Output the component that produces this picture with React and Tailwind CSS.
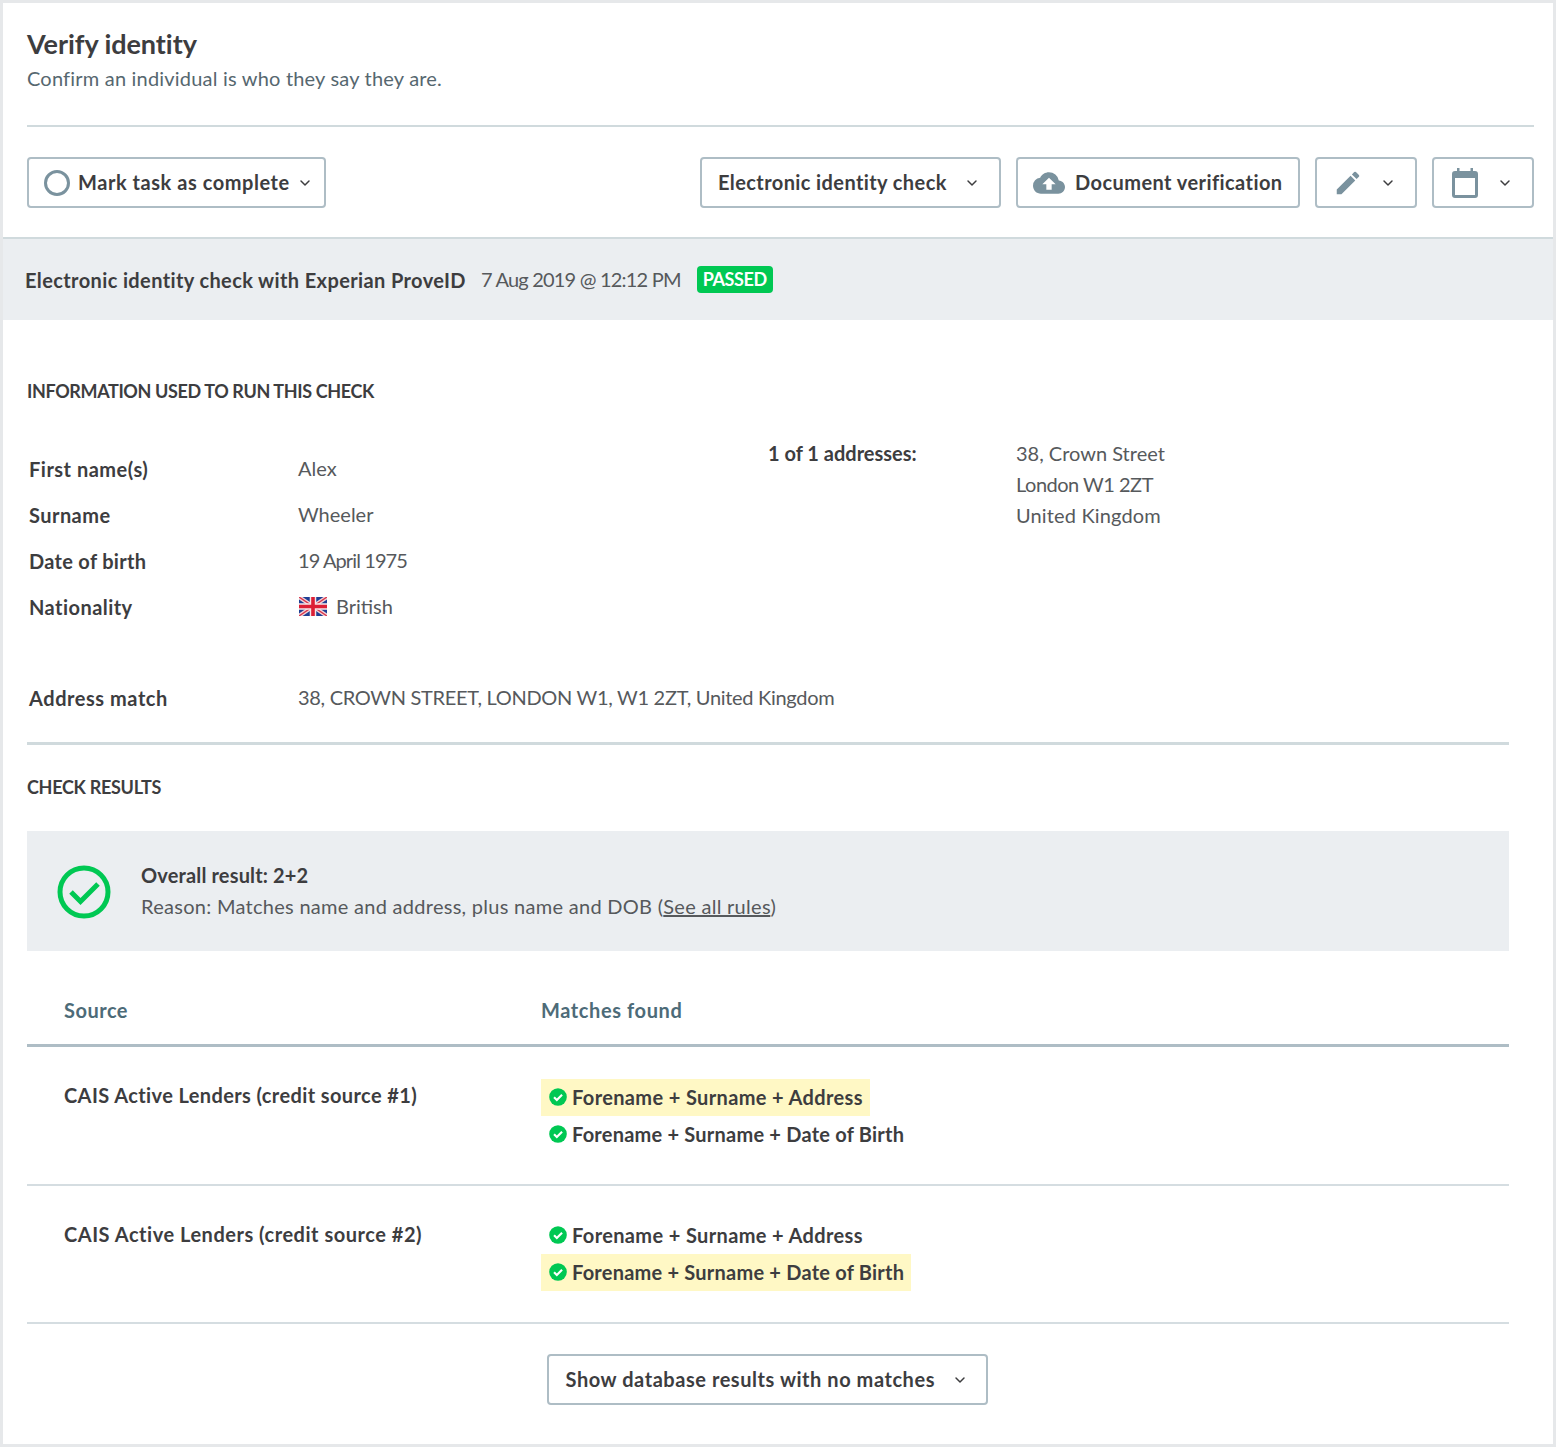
import React from 'react';
import { ChevronDown } from 'lucide-react';

const CheckBadge = ({ className }) => (
  <svg viewBox="0 0 20 20" className={className}>
    <circle cx="10" cy="10" r="9.8" fill="#00c853" />
    <path d="M5.6 10.3l3.1 3 5.8-5.8" fill="none" stroke="#fff" strokeWidth="2.4" />
  </svg>
);

const Flag = () => (
  <svg viewBox="0 0 28 19" className="w-[28px] h-[19px] shrink-0 ml-[1px]">
    <rect width="28" height="19" fill="#1f3f94" />
    <path d="M0 0L28 19M28 0L0 19" stroke="#f3d3d6" strokeWidth="4" />
    <path d="M0 0L28 19M28 0L0 19" stroke="#d8344a" strokeWidth="1.4" />
    <path d="M14 0V19M0 9.5H28" stroke="#f7e6e8" strokeWidth="6.5" />
    <path d="M14 0V19M0 9.5H28" stroke="#dc1f35" strokeWidth="3.6" />
  </svg>
);

const Btn = ({ className = '', children }) => (
  <div className={`h-[51px] flex items-center bg-white border-2 border-[#aebdc5] rounded-[4px] font-bold text-[20px] text-[#3d3d3f] ${className}`}>
    {children}
  </div>
);

const Chevron = ({ className = '' }) => (
  <ChevronDown size={16} strokeWidth={2.2} className={`text-[#3d3d3f] shrink-0 ${className}`} />
);

const Row = ({ label, labelClass = 'tracking-[0.45px]', children }) => (
  <div className="h-[46px] flex items-center">
    <div className={`w-[269px] font-bold text-[#3d3d3f] ${labelClass}`}>{label}</div>
    <div className="flex items-center pb-[2px] text-[#56595c]">{children}</div>
  </div>
);

const Match = ({ text, hl, track }) => (
  <div className={`h-[37px] pl-[8px] pr-[7px] flex items-center gap-[5px] w-fit font-bold text-[#3d3d3f] ${hl ? 'bg-[#fff8c5]' : ''}`}>
    <CheckBadge className="w-[18px] h-[18px] -mt-[2px]" />
    <span className={`pb-[2px] ${track}`}>{text}</span>
  </div>
);

const Source = ({ name, top, hlFirst, height, pad }) => (
  <div className={`border-b-2 border-[#d5dde1] flex ${height}`}>
    <div className={`w-[514px] pl-[37px] font-bold text-[#3d3d3f] ${top}`}>{name}</div>
    <div className={pad}>
      <Match text="Forename + Surname + Address" hl={hlFirst} track="tracking-[0.36px]" />
      <Match text="Forename + Surname + Date of Birth" hl={!hlFirst} track="tracking-[0.22px]" />
    </div>
  </div>
);

export default function App() {
  return (
    <div className="w-[1556px] h-[1447px] border-[3px] border-[#e6e8ea] bg-white text-[20px] font-['Lato','Open_Sans',sans-serif] text-[#3d3d3f]">
      <div className="px-[24px] pt-[23px]">
        <h1 className="text-[27px] leading-[36px] font-bold text-[#3d3d3f] tracking-[-0.05px]">Verify identity</h1>
        <p className="leading-[32px] text-[#56676f] tracking-[0.2px]">Confirm an individual is who they say they are.</p>
        <div className="mt-[31px] h-[2px] w-[1507px] bg-[#d0dadd]" />
        <div className="mt-[30px] flex w-[1507px]">
          <Btn className="w-[299px] pl-[15px]">
            <span className="w-[26px] h-[26px] rounded-full border-[3px] border-[#7a929e] mr-[8px]" />
            <span className="pb-[1px] tracking-[0.55px]">Mark task as complete</span>
            <Chevron className="ml-[7px]" />
          </Btn>
          <Btn className="ml-auto w-[301px] pl-[16px]">
            <span className="pb-[1px] tracking-[0.4px]">Electronic identity check</span>
            <Chevron className="ml-[17px]" />
          </Btn>
          <Btn className="ml-[15px] w-[284px] pl-[15px]">
            <svg viewBox="0 0 24 24" className="w-[32px] h-[32px] mr-[10px] fill-[#7a929e]">
              <path d="M19.35 10.04A7.49 7.49 0 0 0 12 4C9.11 4 6.6 5.64 5.35 8.04A5.99 5.99 0 0 0 0 14c0 3.31 2.69 6 6 6h13c2.76 0 5-2.24 5-5 0-2.64-2.05-4.78-4.65-4.96zM14 13v4h-4v-4H7l5-5 5 5h-3z" />
            </svg>
            <span className="pb-[1px] tracking-[0.43px]">Document verification</span>
          </Btn>
          <Btn className="ml-[15px] w-[102px] pl-[16px]">
            <svg viewBox="0 0 24 24" className="w-[30px] h-[30px] fill-[#7a929e]">
              <path d="M3 17.25V21h3.75L17.81 9.94l-3.75-3.75L3 17.25zM20.71 7.04a1 1 0 0 0 0-1.41l-2.34-2.34a1 1 0 0 0-1.41 0l-1.83 1.83 3.75 3.75 1.83-1.83z" />
            </svg>
            <Chevron className="ml-[17px]" />
          </Btn>
          <Btn className="ml-[15px] w-[102px] pl-[18px]">
            <svg viewBox="0 0 26 30" className="w-[26px] h-[30px] fill-[#7a929e]">
              <path d="M5 0h2.5v3h11V0H21v3h2a3 3 0 0 1 3 3v21a3 3 0 0 1-3 3H3a3 3 0 0 1-3-3V6a3 3 0 0 1 3-3h2V0zM3 10v17h20V10H3z" />
            </svg>
            <Chevron className="ml-[19px]" />
          </Btn>
        </div>
      </div>

      <div className="mt-[29px] h-[83px] bg-[#ebeef1] border-t-2 border-[#d0dadd] pl-[22px] flex items-center">
        <span className="pt-[1px] font-bold text-[#3d3d3f] tracking-[0.38px]">Electronic identity check with Experian ProveID</span>
        <span className="ml-[15px] pb-[1px] text-[#56595c] tracking-[-0.8px]">7 Aug 2019 @ 12:12 PM</span>
        <span className="ml-[16px] h-[27px] px-[6px] flex items-center bg-[#00c853] rounded-[4px] text-white font-bold text-[18px] tracking-[-0.4px]">PASSED</span>
      </div>

      <div className="pl-[24px] w-[1506px]">
        <h2 className="mt-[58px] leading-[26px] text-[18px] font-bold text-[#3d3d3f] tracking-[-0.38px]">INFORMATION USED TO RUN THIS CHECK</h2>
        <div className="mt-[27px] flex">
          <div className="pl-[2px] pt-[15px] w-[741px]">
            <Row label="First name(s)" labelClass="tracking-[0.5px]">Alex</Row>
            <Row label="Surname">Wheeler</Row>
            <Row label="Date of birth" labelClass="tracking-[0.3px]"><span className="tracking-[-0.9px]">19 April 1975</span></Row>
            <Row label="Nationality">
              <Flag />
              <span className="ml-[9px]">British</span>
            </Row>
          </div>
          <div className="flex leading-[31px] pt-[7px]">
            <div className="w-[248px] font-bold">1 of 1 addresses:</div>
            <div className="text-[#56595c]">
              <div>38, Crown Street</div>
              <div className="tracking-[-0.5px]">London W1 2ZT</div>
              <div className="tracking-[0.15px]">United Kingdom</div>
            </div>
          </div>
        </div>
        <div className="pl-[2px] mt-[45px]">
          <Row label="Address match" labelClass="tracking-[0.55px]"><span className="tracking-[-0.3px]">38, CROWN STREET, LONDON W1, W1 2ZT, United Kingdom</span></Row>
        </div>
        <div className="mt-[21px] h-[3px] bg-[#d0dadd]" />
        <h2 className="mt-[29px] leading-[26px] text-[18px] font-bold text-[#3d3d3f] tracking-[-0.3px]">CHECK RESULTS</h2>
        <div className="mt-[31px] h-[120px] bg-[#ebeef1] flex items-center pl-[30px]">
          <svg viewBox="0 0 54 54" className="w-[54px] h-[54px] shrink-0 mt-[2px]">
            <circle cx="27" cy="27" r="24" fill="none" stroke="#00c853" strokeWidth="5" />
            <path d="M14 27l9.5 9.5L41 19" fill="none" stroke="#00c853" strokeWidth="5" />
          </svg>
          <div className="ml-[30px] leading-[31px]">
            <div className="font-bold tracking-[0.15px]">Overall result: 2+2</div>
            <div className="text-[#56595c] tracking-[0.28px]">Reason: Matches name and address, plus name and DOB (<span className="underline">See all rules</span>)</div>
          </div>
        </div>
        <div className="h-[96px] border-b-[3px] border-[#aebdc5] flex items-end pb-[19px] font-bold text-[#4d6b78]">
          <div className="w-[514px] pl-[37px] tracking-[0.5px]">Source</div>
          <div className="tracking-[0.6px]">Matches found</div>
        </div>
        <Source name="CAIS Active Lenders (credit source #1)" top="pt-[33px] tracking-[0.39px]" height="h-[139px]" pad="pt-[32px]" hlFirst />
        <Source name="CAIS Active Lenders (credit source #2)" top="pt-[33px] tracking-[0.52px]" height="h-[138px]" pad="pt-[31px]" />
        <div className="mt-[30px] flex justify-center pr-[2px]">
          <Btn className="w-[441px] pl-[17px]">
            <span className="pb-[1px] tracking-[0.55px]">Show database results with no matches</span>
            <Chevron className="ml-[17px]" />
          </Btn>
        </div>
      </div>
    </div>
  );
}
